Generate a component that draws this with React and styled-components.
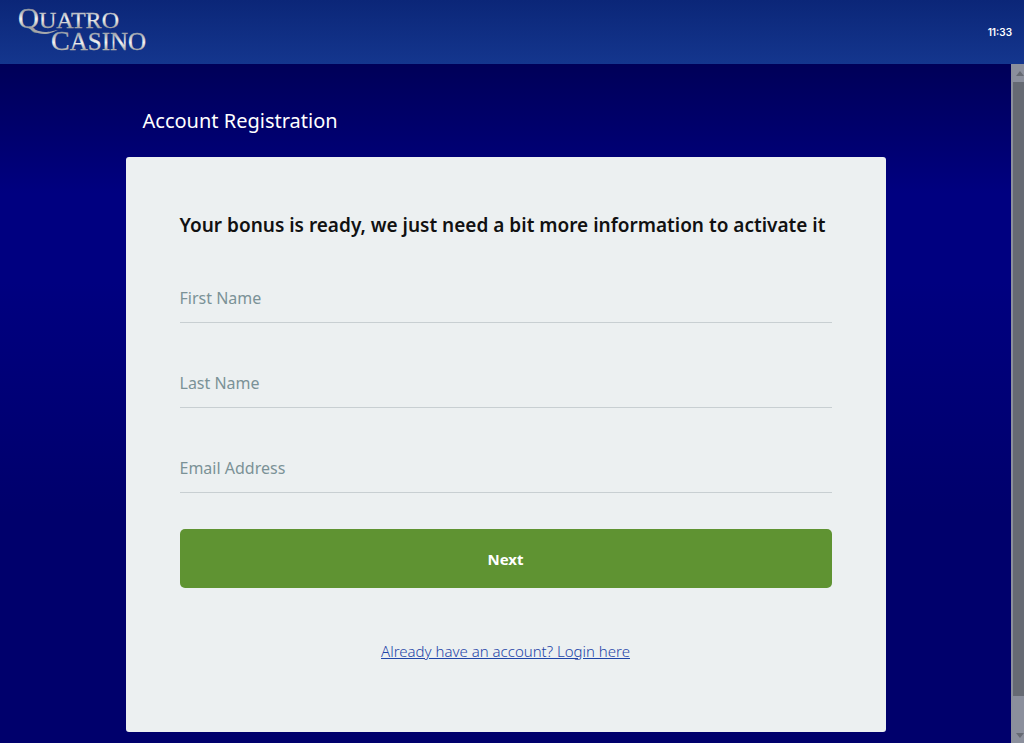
import React from "react";
import styled, { createGlobalStyle } from "styled-components";

const GlobalStyle = createGlobalStyle`
  * {
    box-sizing: border-box;
  }

  body {
    margin: 0;
    font-family: "Noto Sans", "Open Sans", sans-serif;
  }
`;

const Page = styled.div`
  display: flex;
  flex-direction: column;
  min-height: 100vh;
`;

const Header = styled.header`
  display: flex;
  align-items: center;
  justify-content: space-between;
  height: 64px;
  padding: 0 12px 0 16px;
  background: linear-gradient(#0b2678, #14368e);
`;

const LogoLink = styled.a`
  display: flex;
`;

const LogoDrawing = styled.svg`
  overflow: visible;
`;

const Clock = styled.time`
  color: #fff;
  font-family: Inter, sans-serif;
  font-size: 10px;
  font-weight: 600;
`;

const Body = styled.div`
  display: flex;
  flex: 1;
`;

const Content = styled.main`
  flex: 1;
  padding: 41px 16px 12px;
  background: linear-gradient(#000058, #000080 19%, #000080 32%, #00006c 66%);
`;

const Registration = styled.div`
  max-width: 760px;
  margin: 0 auto;
`;

const Title = styled.h1`
  margin: 0;
  padding: 0 17px 20px;
  color: #fff;
  font-size: 20px;
  font-weight: 400;
  line-height: 32px;
`;

const Card = styled.form`
  display: flex;
  flex-direction: column;
  padding: 52px 54px 68px;
  border-radius: 3px;
  background: #ecf0f1;
`;

const Intro = styled.h2`
  margin: 0 0 33px;
  color: #111;
  font-size: 19px;
  font-weight: 600;
  line-height: 32px;
`;

const Fields = styled.div`
  display: flex;
  flex-direction: column;
  gap: 36px;
  margin-bottom: 36px;
`;

const Field = styled.input`
  height: 49px;
  padding: 0;
  border: 0;
  border-bottom: 1px solid #c8cfd2;
  background: transparent;
  color: #111;
  font-family: inherit;
  font-size: 16px;
  outline: none;

  &::placeholder {
    color: #7b9297;
    opacity: 1;
  }

  &:focus {
    border-color: #5f9332;
  }
`;

const NextButton = styled.button`
  height: 59px;
  margin-bottom: 50px;
  border: 0;
  border-radius: 5px;
  background: #5f9332;
  color: #fff;
  font-family: inherit;
  font-size: 15px;
  font-weight: 700;
  cursor: pointer;
`;

const LoginLink = styled.a`
  align-self: center;
  color: #1f45a8;
  font-size: 15px;
  font-weight: 300;
  line-height: 26px;
`;

const ScrollRail = styled.div`
  display: flex;
  flex-direction: column;
  width: 13px;
  padding-left: 2px;
  background: #8b8f9c;
`;

const ScrollThumb = styled.div`
  flex: 1;
  margin-bottom: 30px;
  background: #666a73;
`;

const ScrollButton = styled.button`
  display: flex;
  align-items: center;
  justify-content: flex-end;
  height: 18px;
  padding: 0;
  border: 0;
  background: transparent;
`;

const Logo = () => (
  <LogoDrawing width="132" height="56" viewBox="0 0 132 56" role="img" aria-label="Quatro Casino">
    <defs>
      <linearGradient id="silverTop" gradientUnits="userSpaceOnUse" x1="0" y1="4" x2="0" y2="26">
        <stop offset="0" stopColor="#858b98" />
        <stop offset="0.5" stopColor="#f4f4f4" />
        <stop offset="1" stopColor="#8f8f8f" />
      </linearGradient>
      <linearGradient id="silverBottom" gradientUnits="userSpaceOnUse" x1="0" y1="27" x2="0" y2="48">
        <stop offset="0" stopColor="#8a909c" />
        <stop offset="0.55" stopColor="#f4f4f4" />
        <stop offset="1" stopColor="#969696" />
      </linearGradient>
    </defs>
    <g fontFamily="Liberation Serif, serif" strokeWidth="0.3">
      <text x="2" y="24" fill="url(#silverTop)" stroke="url(#silverTop)" fontSize="29">
        Q<tspan fontSize="24">UATRO</tspan>
      </text>
      <text x="35" y="46" fill="url(#silverBottom)" stroke="url(#silverBottom)" fontSize="28">
        C<tspan fontSize="25">ASINO</tspan>
      </text>
    </g>
    <path d="M11 23 C17 24 22 28 29 28 C34 28 36 27 42 26 C37 28 34 30 28 30 C20 30 16 26 11 23Z" fill="#a5a7ab" />
  </LogoDrawing>
);

const fields = [
  { name: "firstName", label: "First Name", type: "text" },
  { name: "lastName", label: "Last Name", type: "text" },
  { name: "email", label: "Email Address", type: "email" },
];

const App = () => {
  const [values, setValues] = React.useState({ firstName: "", lastName: "", email: "" });

  function handleChange({ target }) {
    setValues({ ...values, [target.name]: target.value });
  }

  return (
    <Page>
      <GlobalStyle />
      <Header>
        <LogoLink href="#home">
          <Logo />
        </LogoLink>
        <Clock>11:33</Clock>
      </Header>
      <Body>
        <Content>
          <Registration>
            <Title>Account Registration</Title>
            <Card onSubmit={(event) => event.preventDefault()}>
              <Intro>Your bonus is ready, we just need a bit more information to activate it</Intro>
              <Fields>
                {fields.map(({ name, label, type }) => (
                  <Field
                    key={name}
                    name={name}
                    type={type}
                    placeholder={label}
                    aria-label={label}
                    value={values[name]}
                    onChange={handleChange}
                  />
                ))}
              </Fields>
              <NextButton type="submit">Next</NextButton>
              <LoginLink href="#login">Already have an account? Login here</LoginLink>
            </Card>
          </Registration>
        </Content>
        <ScrollRail>
          <ScrollButton type="button" aria-label="Scroll up">
            <svg width="8" height="5" viewBox="0 0 8 5">
              <path d="M0 5 L4 0 L8 5Z" fill="#666a73" />
            </svg>
          </ScrollButton>
          <ScrollThumb />
          <ScrollButton type="button" aria-label="Scroll down">
            <svg width="8" height="5" viewBox="0 0 8 5">
              <path d="M0 0 L4 5 L8 0Z" fill="#666a73" />
            </svg>
          </ScrollButton>
        </ScrollRail>
      </Body>
    </Page>
  );
};

export default App;
